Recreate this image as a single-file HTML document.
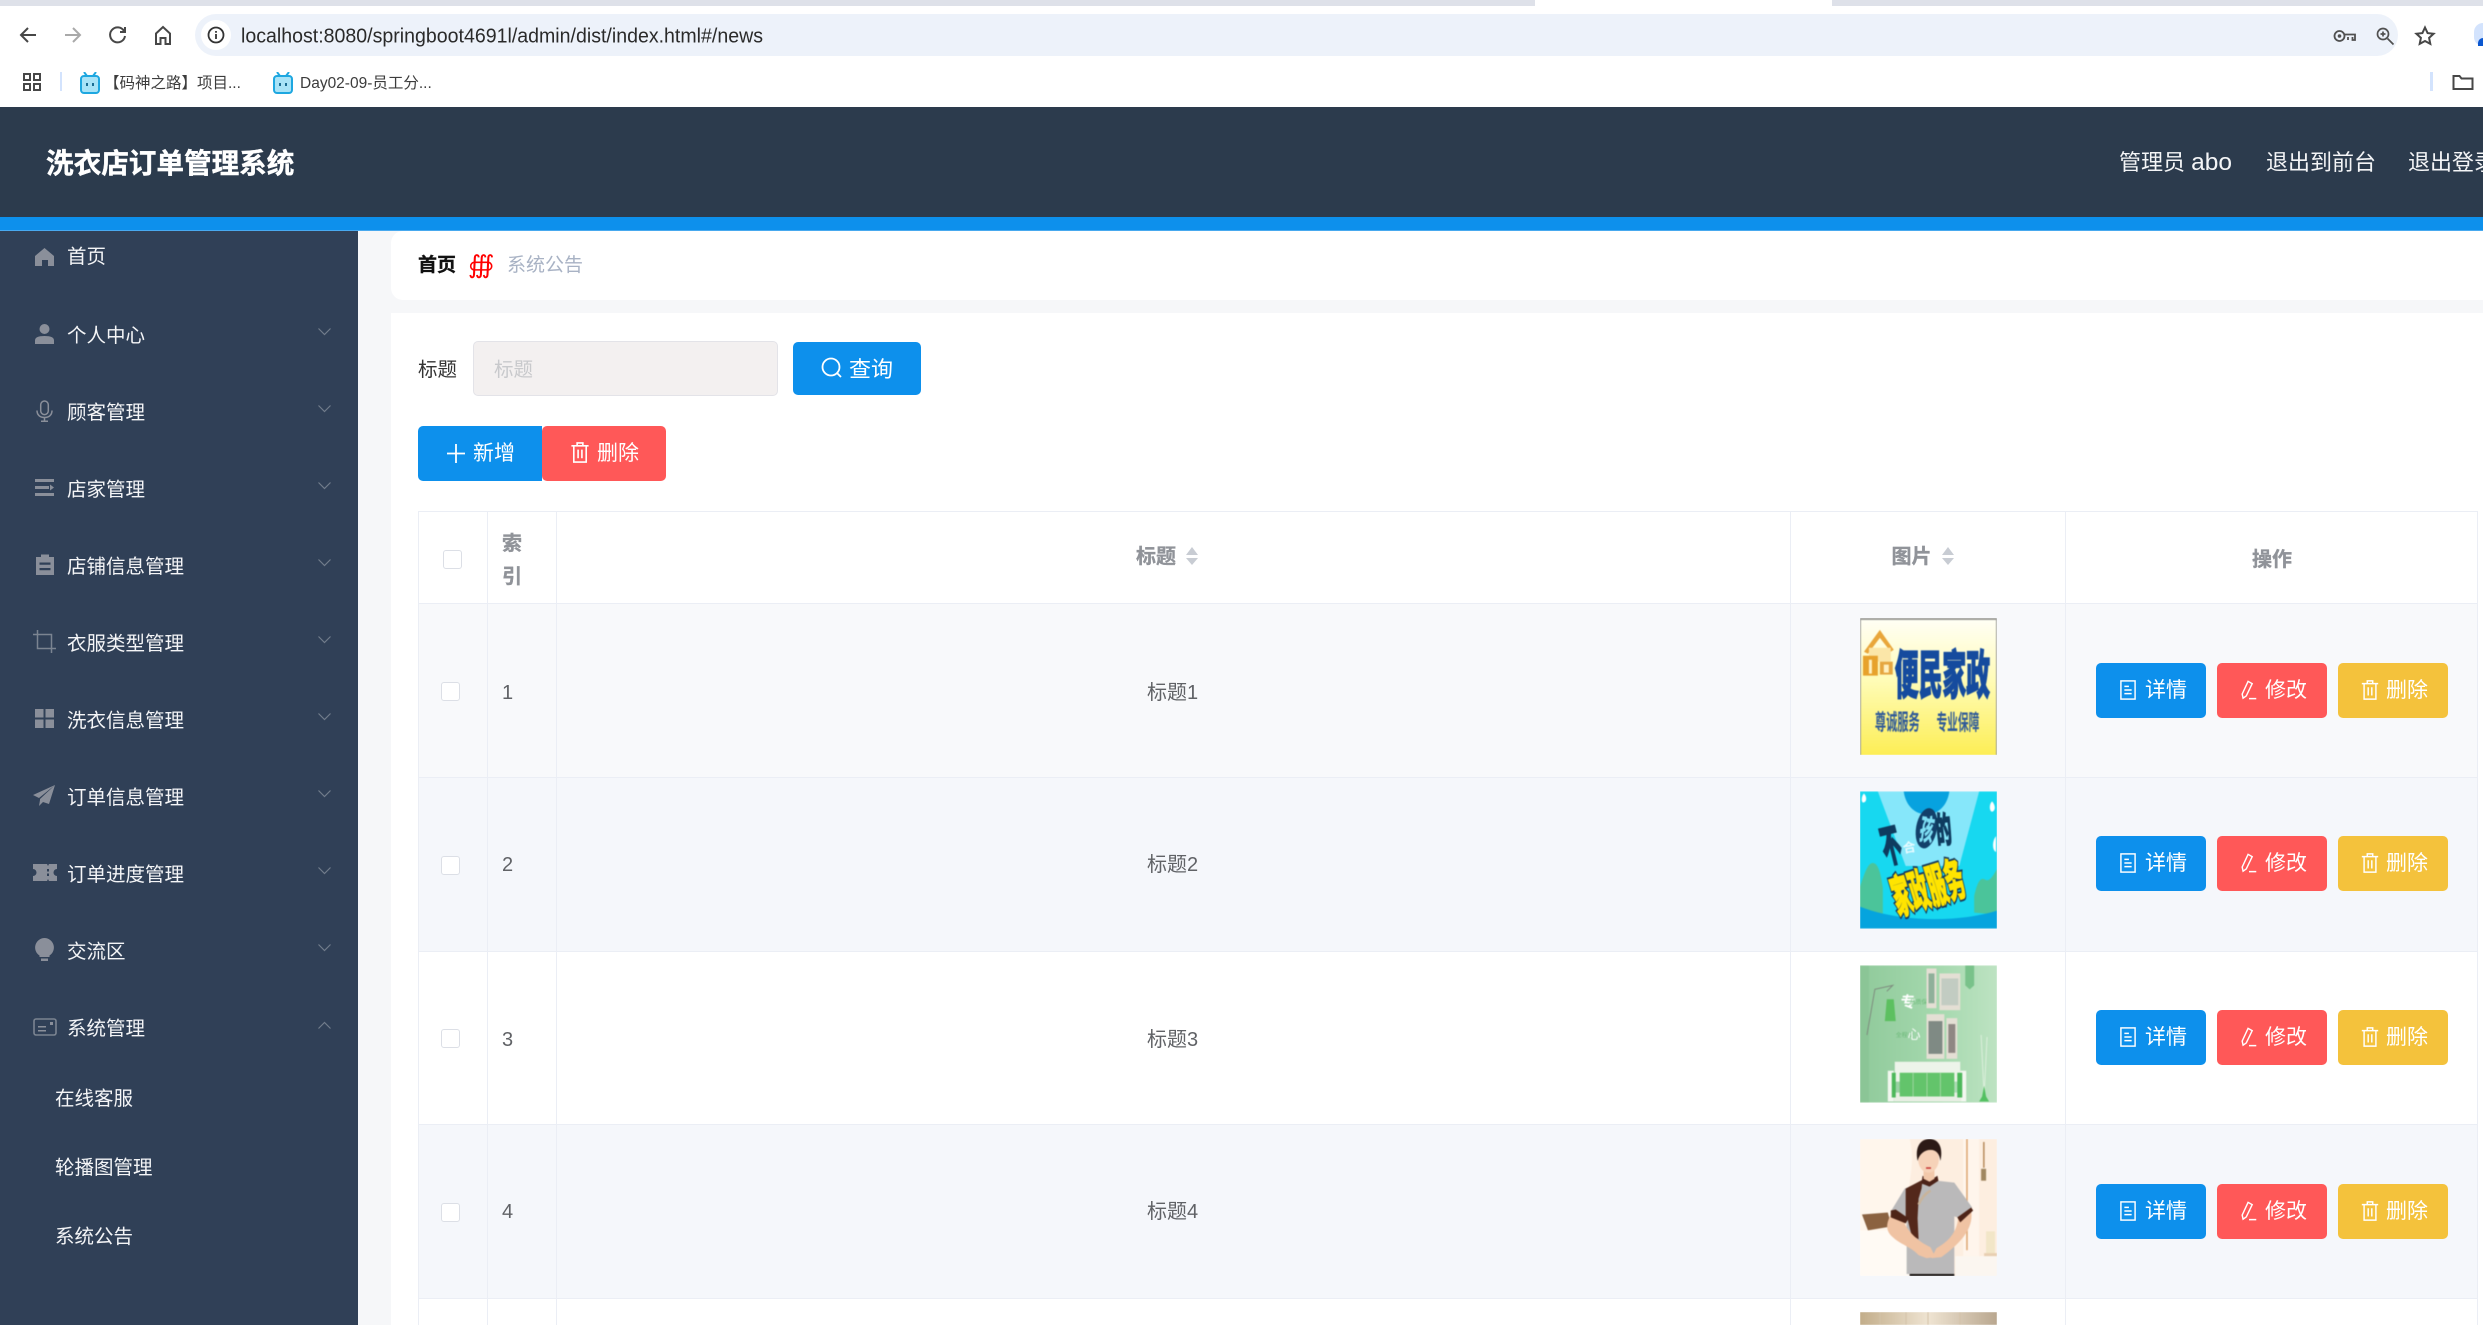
<!DOCTYPE html>
<html lang="zh">
<head>
<meta charset="utf-8">
<title>洗衣店订单管理系统</title>
<style>
html,body{margin:0;padding:0;width:2483px;height:1325px;overflow:hidden;background:#fff}
body{position:relative;font-family:"Liberation Sans","Noto Sans CJK SC",sans-serif}
.a{position:absolute}
.t{position:absolute;white-space:nowrap;line-height:40px;height:40px}
svg{position:absolute;overflow:visible}
.m{color:#f4f5f7;font-size:19.5px;left:67px}
.s{color:#f4f5f7;font-size:19.5px;left:55px}
.ic{left:35px;width:19px;height:19px;fill:#8a8f9a}
.ch{left:318px;width:13px;height:7px;fill:none;stroke:#717c8b;stroke-width:1.2}
.h{left:418px;width:2060px;height:1px;background:#ebeef5}
.v{top:511px;height:814px;width:1px;background:#ebeef5}
.th{color:#909399;font-weight:700;font-size:20px;-webkit-text-stroke:.35px #909399}
.td{color:#606266;font-size:20px}
.cb{left:441px;width:17px;height:17px;border:1px solid #dcdfe6;border-radius:3px;background:#fff}
.btn{position:absolute;height:55px;width:110px;border-radius:5px;color:#fff;font-size:21px}
.btn span{position:absolute;top:8px;line-height:40px;white-space:nowrap}
.btn svg{top:17px;fill:none;stroke:#fff;stroke-width:1.6}
.row{position:absolute;left:2096px;width:352px;height:55px}
.img{position:absolute;left:1860px;width:137px;height:137px;overflow:hidden}
.img svg{left:0;top:0;width:137px;height:137px;overflow:hidden;filter:blur(.6px)}
.car{width:12px;height:18px;fill:#c8ccd3}
.bk{fill:none;stroke:#474747;stroke-width:2}
</style>
</head>
<body>
<svg width="0" height="0" style="position:absolute">
<defs>
<symbol id="doc" viewBox="0 0 18 22"><rect x="1.2" y="1" width="15.6" height="20"/><path d="M5 7h5M5 11h8M5 15h8"/></symbol>
<symbol id="edit" viewBox="0 0 18 22"><path d="M8 1.500l4.500 2.500-6.500 13.500-3.500 2.500-1-4.500zM9 20.500h8"/></symbol>
<symbol id="del" viewBox="0 0 18 22"><path d="M0 4h18M6 4V1h6v3M2.500 4v17h13V4M7 8v9M11 8v9"/></symbol>
<symbol id="bili" viewBox="0 0 20 22"><path d="M4 0l3 4M16 0l-3 4" stroke="#1ea7e0" stroke-width="2" fill="none"/><rect x="1" y="4" width="18" height="17" rx="3" fill="#a8e3f7" stroke="#1ea7e0" stroke-width="2"/><path d="M7 11v3M13 11v3" stroke="#1a6c92" stroke-width="2"/></symbol>
<symbol id="carets" viewBox="0 0 12 18"><path d="M6 0l6 8H0zM6 18L0 11h12z"/></symbol>
</defs>
</svg>

<!-- chrome -->
<div class="a" style="left:0;top:0;width:2483px;height:6px;background:#dee1e9"></div>
<div class="a" style="left:1535px;top:0;width:297px;height:6px;background:#fff"></div>
<div class="a" style="left:0;top:6px;width:2483px;height:101px;background:#fff;border-radius:8px 0 0 0"></div>
<svg style="left:18px;top:25px" width="20" height="20" viewBox="0 0 20 20"><path class="bk" d="M18 10H3M10 3l-7 7 7 7"/></svg>
<svg style="left:63px;top:25px" width="20" height="20" viewBox="0 0 20 20"><path d="M2 10h15M10 3l7 7-7 7" fill="none" stroke="#a9a9a9" stroke-width="2"/></svg>
<svg style="left:108px;top:25px" width="20" height="20" viewBox="0 0 20 20"><path class="bk" d="M16 6a7.500 7.500 0 1 0 1 5M17 2v5h-5"/></svg>
<svg style="left:153px;top:25px" width="20" height="21" viewBox="0 0 20 21"><path class="bk" d="M3 8.500L10 2l7 6.500V19h-4.500v-6h-5v6H3z"/></svg>
<div class="a" style="left:195px;top:14px;width:2203px;height:42px;background:#edf2fa;border-radius:21px"></div>
<div class="a" style="left:201px;top:20px;width:30px;height:30px;border-radius:50%;background:#fff"></div>
<svg style="left:207px;top:26px" width="18" height="18" viewBox="0 0 18 18"><circle cx="9" cy="9" r="7.500" fill="none" stroke="#333" stroke-width="1.800"/><path d="M9 8v5M9 5v1.800" stroke="#333" stroke-width="1.800"/></svg>
<svg style="left:241px;top:20px" width="530" height="30"><text x="0" y="22.500" font-size="20" fill="#2a2a2a" textLength="522" lengthAdjust="spacingAndGlyphs" font-family="Liberation Sans, sans-serif">localhost:8080/springboot4691l/admin/dist/index.html#/news</text></svg>
<svg style="left:2333px;top:29px" width="23" height="14" viewBox="0 0 23 14"><circle cx="6.500" cy="7" r="5" fill="none" stroke="#505050" stroke-width="1.800"/><circle cx="6.500" cy="7" r="1.800" fill="#505050"/><path d="M11 5.500h11V11h-2.500V8M15 8v3" fill="none" stroke="#505050" stroke-width="1.800"/></svg>
<svg style="left:2376px;top:27px" width="19" height="18" viewBox="0 0 19 18"><circle cx="7" cy="7" r="5.500" fill="none" stroke="#505050" stroke-width="1.700"/><path d="M11.500 11.500l6 6M7 4.500v5M4.500 7h5" stroke="#505050" stroke-width="1.700" fill="none"/></svg>
<svg style="left:2415px;top:26px" width="20" height="19" viewBox="0 0 20 19"><path d="M10 1.500l2.600 5.600 6 .7-4.500 4.100 1.200 6L10 15l-5.300 2.900 1.200-6-4.500-4.100 6-.7z" fill="none" stroke="#474747" stroke-width="2"/></svg>
<div class="a" style="left:2474px;top:23px;width:9px;height:23px;border-radius:12px 0 0 12px;background:#d3e3fd"></div>
<div class="a" style="left:2478px;top:38px;width:5px;height:8px;border-radius:5px 0 0 0;background:#0b57d0"></div>
<svg style="left:23px;top:73px" width="18" height="18" viewBox="0 0 18 18"><path d="M1 1h6v6H1zM11 1h6v6h-6zM1 11h6v6H1zM11 11h6v6h-6z" fill="none" stroke="#474747" stroke-width="2"/></svg>
<div class="a" style="left:60px;top:72px;width:2px;height:19px;background:#d3e3fd"></div>
<svg style="left:80px;top:72px" width="20" height="22"><use href="#bili"/></svg>
<span class="t" style="left:104px;top:64px;font-size:15.5px;color:#3c3c3c">【码神之路】项目...</span>
<svg style="left:273px;top:72px" width="20" height="22"><use href="#bili"/></svg>
<span class="t" style="left:300px;top:64px;font-size:15.5px;color:#3c3c3c">Day02-09-员工分...</span>
<div class="a" style="left:2430px;top:72px;width:3px;height:19px;background:#d3e3fd"></div>
<svg style="left:2452px;top:74px" width="22" height="16" viewBox="0 0 22 16"><path d="M1.500 2h6l2 2.500h11V15h-19z" fill="none" stroke="#474747" stroke-width="2"/></svg>

<!-- header -->
<div class="a" style="left:0;top:107px;width:2483px;height:110px;background:#2c3b4d"></div>
<div class="a" style="left:0;top:217px;width:2483px;height:13px;background:#0d90ec"></div>
<div class="a" style="left:0;top:230px;width:2483px;height:1px;background:#48a9ef"></div>
<span class="t" style="left:46px;top:144px;font-size:27.6px;font-weight:700;color:#fff;-webkit-text-stroke:.4px #fff">洗衣店订单管理系统</span>
<span class="t" style="left:2119px;top:143px;font-size:22px;color:#f4f5f7">管理员 <span style="font-size:24.500px">abo</span></span>
<span class="t" style="left:2266px;top:143px;font-size:22px;color:#f4f5f7">退出到前台</span>
<span class="t" style="left:2408px;top:143px;font-size:22px;color:#f4f5f7">退出登录</span>

<!-- sidebar -->
<div class="a" style="left:0;top:231px;width:358px;height:1094px;background:#304057"></div>
<svg class="ic" style="top:248px" viewBox="0 0 19 19"><path d="M9.500 0L19 8v10h-6v-6H7v6H0V8z"/></svg>
<span class="t m" style="top:236.500px">首页</span>

<svg class="ic" style="top:324px;height:20px" viewBox="0 0 19 20"><circle cx="9.500" cy="5" r="5"/><path d="M0 20v-3.500c0-3 3-4.500 9.500-4.500S19 13.500 19 16.500V20z"/></svg>
<span class="t m" style="top:315.500px">个人中心</span>
<svg class="ch" style="top:328px" viewBox="0 0 13 7"><path d="M.5.500L6.500 6.500 12.500.500"/></svg>

<svg class="ic" style="top:400px;height:22px" viewBox="0 0 19 22"><path d="M9.500 1a3.800 3.800 0 0 0-3.800 3.800v6a3.800 3.800 0 0 0 7.600 0v-6A3.800 3.800 0 0 0 9.500 1zM2 10.500c0 4.500 3 7 7.500 7s7.500-2.500 7.500-7M9.500 17.500V21M6 21.200h7" fill="none" stroke="#8a8f9a" stroke-width="1.500"/></svg>
<span class="t m" style="top:392.500px">顾客管理</span>
<svg class="ch" style="top:405px" viewBox="0 0 13 7"><path d="M.5.500L6.500 6.500 12.500.500"/></svg>

<svg class="ic" style="top:479px;height:17px" viewBox="0 0 19 17"><path d="M0 0h19v3H0zM0 7h14v3H0zM0 14h19v3H0zM15 5.500l4 3-4 3z"/></svg>
<span class="t m" style="top:469.500px">店家管理</span>
<svg class="ch" style="top:482px" viewBox="0 0 13 7"><path d="M.5.500L6.500 6.500 12.500.500"/></svg>

<svg class="ic" style="top:554px;height:21px;left:35.500px;width:18px" viewBox="0 0 18 21"><path d="M0 3h5V0.500h8V3h5v18H0zM3.500 8.500v2.200h11V8.500zM3.500 14v2.200h11V14z" fill-rule="evenodd"/></svg>
<span class="t m" style="top:546.500px">店铺信息管理</span>
<svg class="ch" style="top:559px" viewBox="0 0 13 7"><path d="M.5.500L6.500 6.500 12.500.500"/></svg>

<svg class="ic" style="top:630px;left:33px;width:23px;height:23px" viewBox="0 0 23 23"><path d="M4.500 0v18.500H23M0 4.500h18.500V23" fill="none" stroke="#7b8491" stroke-width="1.500"/></svg>
<span class="t m" style="top:623.500px">衣服类型管理</span>
<svg class="ch" style="top:636px" viewBox="0 0 13 7"><path d="M.5.500L6.500 6.500 12.500.500"/></svg>

<svg class="ic" style="top:709px" viewBox="0 0 19 19"><path d="M0 0h8.500v8.500H0zM10.500 0H19v8.500h-8.500zM0 10.500h8.500V19H0zM10.500 10.500H19V19h-8.500z"/></svg>
<span class="t m" style="top:700.500px">洗衣信息管理</span>
<svg class="ch" style="top:713px" viewBox="0 0 13 7"><path d="M.5.500L6.500 6.500 12.500.500"/></svg>

<svg class="ic" style="top:785px;left:33px;width:22px;height:21px" viewBox="0 0 22 21"><path d="M22 0L0 10l6 3L22 0zM22 0L7 14v1l-1 6 4-4 6 2z"/></svg>
<span class="t m" style="top:777.500px">订单信息管理</span>
<svg class="ch" style="top:790px" viewBox="0 0 13 7"><path d="M.5.500L6.500 6.500 12.500.500"/></svg>

<svg class="ic" style="top:864px;left:33px;width:24px;height:17px" viewBox="0 0 24 17"><path d="M0 0h14l1 2 1-2h8v5a3.500 3.500 0 0 0 0 7v5h-8l-1-2-1 2H0v-5a3.500 3.500 0 0 0 0-7zM14 5v2.500h2V5zM14 9.500V12h2V9.500z" fill-rule="evenodd"/></svg>
<span class="t m" style="top:854.500px">订单进度管理</span>
<svg class="ch" style="top:867px" viewBox="0 0 13 7"><path d="M.5.500L6.500 6.500 12.500.500"/></svg>

<svg class="ic" style="top:938px;height:23px" viewBox="0 0 19 23"><path d="M9.500 0a9.500 9.500 0 0 1 5 17.500V19h-10v-1.500A9.500 9.500 0 0 1 9.500 0zM6 20.500h7V23H6z"/></svg>
<span class="t m" style="top:931.500px">交流区</span>
<svg class="ch" style="top:944px" viewBox="0 0 13 7"><path d="M.5.500L6.500 6.500 12.500.500"/></svg>

<svg class="ic" style="top:1018px;left:33px;width:24px;height:18px" viewBox="0 0 24 18"><rect x="1" y="1" width="22" height="16" rx="2" fill="none" stroke="#7b8491" stroke-width="1.600"/><path d="M5 8h8v1.500H5zM5 12h8v1.500H5zM17 4h3v3h-3z" fill="#8a8f9a"/></svg>
<span class="t m" style="top:1008.500px">系统管理</span>
<svg class="ch" style="top:1022px" viewBox="0 0 13 7"><path d="M.5 6.500L6.500.500l6 6"/></svg>
<span class="t s" style="top:1078.500px">在线客服</span>
<span class="t s" style="top:1148px">轮播图管理</span>
<span class="t s" style="top:1217px">系统公告</span>

<!-- content -->
<div class="a" style="left:358px;top:231px;width:2125px;height:1094px;background:#f6f7f9"></div>
<div class="a" style="left:391px;top:231px;width:2092px;height:69px;background:#fff;border-radius:12px 0 0 12px"></div>
<span class="t" style="left:418px;top:246px;font-size:19px;font-weight:700;color:#111;-webkit-text-stroke:.3px #111">首页</span>
<span class="t" style="left:468px;top:245px;font-size:25px;color:#f00;font-family:'DejaVu Sans',sans-serif;font-style:italic">∰</span>
<span class="t" style="left:507px;top:246px;font-size:19px;color:#a8b2c4">系统公告</span>
<div class="a" style="left:391px;top:313px;width:2092px;height:1012px;background:#fff"></div>

<span class="t" style="left:418px;top:349.500px;font-size:19.500px;color:#333">标题</span>
<div class="a" style="left:473px;top:341px;width:303px;height:53px;background:#f3f0f0;border:1px solid #e3e3e8;border-radius:5px"></div>
<span class="t" style="left:494px;top:349.500px;font-size:19.500px;color:#c8c9cc">标题</span>
<div class="a" style="left:793px;top:342px;width:128px;height:53px;background:#0d90ec;border-radius:5px"></div>
<svg style="left:821px;top:357px" width="21" height="22" viewBox="0 0 21 22"><circle cx="10" cy="10" r="8.500" fill="none" stroke="#fff" stroke-width="1.800"/><path d="M16 16l4 4" stroke="#fff" stroke-width="1.800"/></svg>
<span class="t" style="left:849px;top:349.500px;font-size:22px;color:#fff">查询</span>

<div class="a" style="left:418px;top:426px;width:124px;height:55px;background:#0d90ec;border-radius:5px 0 0 5px"></div>
<div class="a" style="left:542px;top:426px;width:124px;height:55px;background:#ff5858;border-radius:5px"></div>
<svg style="left:447px;top:444px" width="18" height="19" viewBox="0 0 18 19"><path d="M0 9.500h18M9 0v19" stroke="#fff" stroke-width="1.800"/></svg>
<span class="t" style="left:473px;top:433.500px;font-size:21px;color:#fff">新增</span>
<svg style="left:571px;top:442px;fill:none;stroke:#fff;stroke-width:1.700" width="18" height="21"><use href="#del"/></svg>
<span class="t" style="left:597px;top:433.500px;font-size:21px;color:#fff">删除</span>

<!-- table stripes -->
<div class="a" style="left:418px;top:603px;width:2060px;height:174px;background:#f8f9fb"></div>
<div class="a" style="left:418px;top:777px;width:2060px;height:174px;background:#f5f7fb"></div>
<div class="a" style="left:418px;top:1124px;width:2060px;height:174px;background:#f5f7fb"></div>
<div class="a h" style="top:511px"></div>
<div class="a h" style="top:603px"></div>
<div class="a h" style="top:777px"></div>
<div class="a h" style="top:951px"></div>
<div class="a h" style="top:1124px"></div>
<div class="a h" style="top:1298px"></div>
<div class="a v" style="left:418px"></div>
<div class="a v" style="left:487px"></div>
<div class="a v" style="left:556px"></div>
<div class="a v" style="left:1790px"></div>
<div class="a v" style="left:2065px"></div>
<div class="a v" style="left:2477px"></div>

<div class="a cb" style="top:550px;left:443px"></div>
<span class="t th" style="left:502px;top:523.500px">索</span>
<span class="t th" style="left:502px;top:556.500px">引</span>
<span class="t th" style="left:1136px;top:536.500px">标题</span>
<svg class="car" style="left:1186px;top:547px"><use href="#carets"/></svg>
<span class="t th" style="left:1891.500px;top:536.500px">图片</span>
<svg class="car" style="left:1942px;top:547px"><use href="#carets"/></svg>
<span class="t th" style="left:2252px;top:539.500px">操作</span>

<div class="a cb" style="top:682px"></div><span class="t td" style="left:502px;top:672.500px">1</span><span class="t td" style="left:1147px;top:672.500px">标题1</span>
<div class="a cb" style="top:856px"></div><span class="t td" style="left:502px;top:845px">2</span><span class="t td" style="left:1147px;top:845px">标题2</span>
<div class="a cb" style="top:1029px"></div><span class="t td" style="left:502px;top:1019.500px">3</span><span class="t td" style="left:1147px;top:1019.500px">标题3</span>
<div class="a cb" style="top:1203px"></div><span class="t td" style="left:502px;top:1192px">4</span><span class="t td" style="left:1147px;top:1192px">标题4</span>

<!-- images -->
<div class="img" style="top:618px"><svg viewBox="0 0 138 138">
<defs><linearGradient id="g1" x1="0" y1="0" x2="0" y2="1"><stop offset="0" stop-color="#fffff6"/><stop offset=".45" stop-color="#fffcb8"/><stop offset="1" stop-color="#fdee55"/></linearGradient></defs>
<rect width="138" height="138" fill="url(#g1)"/>
<path d="M0 0h138v2H0zM0 0h1v138H0zM137 0h1v138h-1z" fill="#9a9a94"/>
<path d="M4 34L20 12l14 20-3 2-11-14L8 36z" fill="#e9a63a"/>
<path d="M9 30h22v14H9z" fill="#fbe6a8"/><path d="M3 38h15v20H3z" fill="#e7a22c"/><path d="M20 44h13v13H20z" fill="#e5a640"/><path d="M9 42h3v14H9zM24 47h5v8h-5z" fill="#fff0c0"/>
<text transform="translate(35,76) scale(1,2.200)" font-size="24" font-weight="900" fill="#154b9e" textLength="96" lengthAdjust="spacingAndGlyphs" stroke="#154b9e" stroke-width=".6">便民家政</text>
<text transform="translate(15,113) scale(1,2)" font-size="11.300" font-weight="700" fill="#2f5a98">尊诚服务</text>
<text transform="translate(77,113) scale(1,2)" font-size="10.800" font-weight="700" fill="#2f5a98">专业保障</text>
</svg></div>

<div class="img" style="top:791px;height:138px"><svg style="height:138px" viewBox="0 0 138 138">
<rect width="138" height="138" fill="#17d8f0"/>
<path d="M18 0h102L100 75H46z" fill="#86e7fa"/>
<path d="M44 0h46c-2 14-11 23-23 23S46 14 44 0z" fill="#07a2df"/>
<path d="M0 120V96c5-15 8-24 13-24s8 10 10 25v26zM115 122V105c3-12 5-17 9-17 3 0 5 7 14-10v46z" fill="#4bc49a"/>
<path d="M0 116c40 16 100 16 138 4v18H0z" fill="#05a4de"/>
<path d="M4 2c3 3 3 8 0 9s-3-6 0-9zM133 10c3 3 4 8 1 10s-5-6-1-10zM137 45v16c-4-2-4-11 0-16z" fill="#fff"/>
<ellipse cx="67" cy="37" rx="10.500" ry="20.500" fill="#12406a" transform="rotate(10 67 37)"/>
<text transform="translate(26,72) rotate(-14) scale(1,2.300)" font-size="19" font-weight="900" fill="#0e3b5f" stroke="#0e3b5f" stroke-width=".8">不</text>
<text transform="translate(44,62) rotate(-10)" font-size="13" font-weight="700" fill="#e8fbff">合</text>
<text transform="translate(59,48) rotate(8) scale(1,2.100)" font-size="14" font-weight="900" fill="#7fe0f5">孩</text>
<text transform="translate(78,52) rotate(-6) scale(1,2.300)" font-size="15.500" font-weight="900" fill="#0e3b5f" stroke="#0e3b5f" stroke-width=".6">的</text>
<text transform="translate(38,124) rotate(-17) scale(1,2.500)" font-size="18.500" font-weight="900" fill="#14385c" stroke="#14385c" stroke-width="2">家政服务</text>
<text transform="translate(38,124) rotate(-17) scale(1,2.500)" font-size="18.500" font-weight="900" fill="#ffe400" stroke="#ffe400" stroke-width=".5">家政服务</text>
</svg></div>

<div class="img" style="top:965px;height:138px"><svg style="height:138px" viewBox="0 0 138 138">
<defs><linearGradient id="g3" x1="0" y1="0" x2="1" y2="0"><stop offset="0" stop-color="#90ca9b"/><stop offset=".55" stop-color="#a4d8ad"/><stop offset="1" stop-color="#bde3c2"/></linearGradient></defs>
<rect width="138" height="138" fill="url(#g3)"/>
<rect width="9" height="138" fill="#8bc596"/>
<path d="M106 0h9v20l-4.500 4-4.500-4z" fill="#79c28a"/>
<path d="M7 70L15 24l18-4-6 6" fill="none" stroke="#7e8b7e" stroke-width="1"/>
<path d="M27 34h7l2 22H25z" fill="#5cc060"/>
<text x="41" y="42" font-size="15" font-weight="700" fill="#fff">专</text>
<text x="50" y="39" font-size="6" fill="#6cb878">品质保障</text>
<text x="36" y="72" font-size="6" fill="#6cb878">全程安</text>
<text x="48" y="74" font-size="13" fill="#fff">心</text>
<rect x="67" y="3" width="10" height="40" fill="#e4dfd4"/><rect x="69" y="8" width="6" height="30" fill="#8fb09a"/>
<rect x="80" y="8" width="21" height="37" fill="#e4dfd4"/><rect x="82" y="13" width="17" height="27" fill="#c2ccc2"/>
<rect x="67" y="49" width="18" height="45" fill="#e4dfd4"/><rect x="69" y="56" width="14" height="33" fill="#7f8a84"/>
<rect x="87" y="53" width="11" height="41" fill="#e4dfd4"/><rect x="89" y="59" width="7" height="29" fill="#8f8783"/>
<path d="M35 97h66v20H35z" fill="#edf4ea"/>
<path d="M28 106h6v31h-6zM101 106h6v31h-6z" fill="#f3f7f0"/>
<path d="M34 128h68v9H34z" fill="#e9efe4"/>
<path d="M40 108h55v24H40z" fill="#63c46b"/>
<path d="M53.500 108v24M67.500 108v24M81 108v24" stroke="#9ed69f" stroke-width="1"/>
<path d="M32 108h4v25h-4zM98 108h5v25h-5z" fill="#4db85b"/>
<path d="M122 70l3 60M128 72l-3 60" stroke="#dcefdc" stroke-width="1"/>
<path d="M123 132l2-11 2 11 3 5h-10z" fill="#53c061"/>
</svg></div>

<div class="img" style="top:1139px"><svg viewBox="0 0 138 138">
<rect width="138" height="138" fill="#fdeee0"/>
<path d="M0 0h50C58 30 44 60 34 138H0z" fill="#fff6ec"/>
<path d="M104 0h16v125h-16z" fill="#fff5ec"/>
<path d="M107 0h1.500v112H107z" fill="#dda46e"/>
<path d="M124 3h1.500v26H124z" fill="#b6895a"/><rect x="122" y="30" width="5" height="12" fill="#a08760"/>
<path d="M2 76l26-2 4 14-24 4z" fill="#8b6240"/>
<path d="M0 92h50v46H0z" fill="#fffaf4"/>
<rect x="127" y="93" width="9" height="24" fill="#f2e6c8"/><path d="M125 115h13v23h-13z" fill="#e8cfb2"/>
<path d="M96 118h42v20H96z" fill="#fbf6f0"/>
<path d="M45 50L63 42h15l17 2 18 25-15 10-3-1v58H47V83l-4 2-12-12z" fill="#bab9ba"/>
<path d="M46 50l17-9-1 9-3 10-1 20 1 21-7-4-4-16-2-1z" fill="#53281b"/>
<path d="M59 66c3-7 7-11 12-14" fill="none" stroke="#c9b49a" stroke-width="2.500"/>
<path d="M31 76c-5 10-5 16 1 22 8 8 20 11 27 19l8 3 9-1-5-10c-9-4-24-14-29-31zM112 72l-13 7c-1 12-7 23-22 31l-5 10 10-1c18-13 33-28 30-47z" fill="#f0c3a3"/>
<path d="M31 72l5-1 13 9-3 5-15-6zM98 79l14-10 2 3-13 12z" fill="#4e2417"/>
<path d="M62 45l1-8 7 5 8-5 1 5-9 6-5-2z" fill="#4b2218"/>
<path d="M50 136h45v2H50z" fill="#16110f"/>
<path d="M64 28h11v12l-5 3-6-3z" fill="#f2c8aa"/>
<ellipse cx="69" cy="20" rx="10.500" ry="14" fill="#f6d2b8"/>
<path d="M58 22C55 8 61 0 70 0c9 0 14 8 11 22-1-7-4-11-10-11-6 0-11 4-13 11z" fill="#2c1a16"/>
<path d="M66.500 28.500h5v1.500h-5z" fill="#c43030"/>
</svg></div>

<div class="img" style="top:1312px;height:13px"><svg style="height:13px" viewBox="0 0 137 13">
<defs><linearGradient id="g5" x1="0" y1="0" x2="1" y2="0"><stop offset="0" stop-color="#c2ad8a"/><stop offset=".5" stop-color="#efe4d2"/><stop offset="1" stop-color="#b9a78f"/></linearGradient></defs>
<rect width="137" height="13" fill="url(#g5)"/>
<path d="M20 0v13M46 0v13M68 0v13M100 0v13" stroke="#d3c2a8" stroke-width="1"/>
</svg></div>

<!-- action buttons -->
<div class="row" style="top:663px">
<div class="btn" style="left:0;background:#0d90ec"><svg style="left:23px" width="18" height="20"><use href="#doc"/></svg><span style="left:49px">详情</span></div>
<div class="btn" style="left:121px;background:#ff5858"><svg style="left:23px" width="18" height="20"><use href="#edit"/></svg><span style="left:48px">修改</span></div>
<div class="btn" style="left:242px;background:#f4c23c"><svg style="left:23px" width="18" height="20"><use href="#del"/></svg><span style="left:48px">删除</span></div>
</div>
<div class="row" style="top:836px">
<div class="btn" style="left:0;background:#0d90ec"><svg style="left:23px" width="18" height="20"><use href="#doc"/></svg><span style="left:49px">详情</span></div>
<div class="btn" style="left:121px;background:#ff5858"><svg style="left:23px" width="18" height="20"><use href="#edit"/></svg><span style="left:48px">修改</span></div>
<div class="btn" style="left:242px;background:#f4c23c"><svg style="left:23px" width="18" height="20"><use href="#del"/></svg><span style="left:48px">删除</span></div>
</div>
<div class="row" style="top:1010px">
<div class="btn" style="left:0;background:#0d90ec"><svg style="left:23px" width="18" height="20"><use href="#doc"/></svg><span style="left:49px">详情</span></div>
<div class="btn" style="left:121px;background:#ff5858"><svg style="left:23px" width="18" height="20"><use href="#edit"/></svg><span style="left:48px">修改</span></div>
<div class="btn" style="left:242px;background:#f4c23c"><svg style="left:23px" width="18" height="20"><use href="#del"/></svg><span style="left:48px">删除</span></div>
</div>
<div class="row" style="top:1184px">
<div class="btn" style="left:0;background:#0d90ec"><svg style="left:23px" width="18" height="20"><use href="#doc"/></svg><span style="left:49px">详情</span></div>
<div class="btn" style="left:121px;background:#ff5858"><svg style="left:23px" width="18" height="20"><use href="#edit"/></svg><span style="left:48px">修改</span></div>
<div class="btn" style="left:242px;background:#f4c23c"><svg style="left:23px" width="18" height="20"><use href="#del"/></svg><span style="left:48px">删除</span></div>
</div>
</body>
</html>
